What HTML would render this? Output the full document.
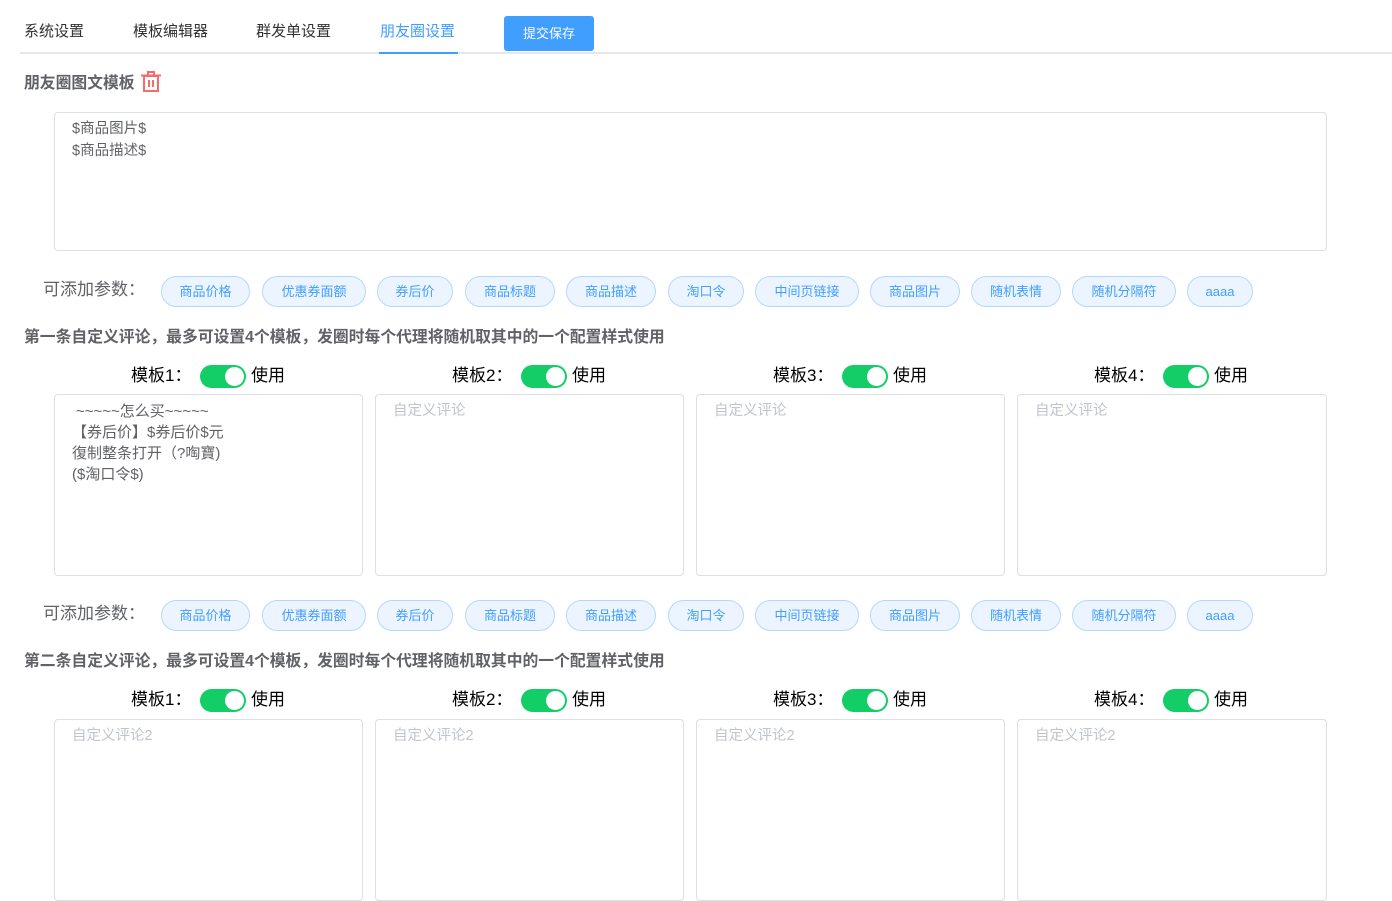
<!DOCTYPE html>
<html><head><meta charset="utf-8"><style>
*{box-sizing:border-box;margin:0;padding:0}
body{width:1392px;height:812px;overflow:hidden;background:#fff;font-family:"Liberation Sans","Noto Sans CJK SC",sans-serif;position:relative}
.a{position:absolute;white-space:nowrap}
.tab{font-size:15px;color:#303133;top:22px;line-height:20px}
.h{font-size:15.8px;font-weight:bold;color:#606266;line-height:20px}
.box{position:absolute;border:1px solid #dcdfe6;border-radius:4px;background:#fff}
.txt{font-size:15px;color:#606266;line-height:21px}
.ph{font-size:14.5px;color:#c0c4cc;line-height:21px}
.tag{position:absolute;height:31px;border:1px solid #b3d8ff;background:#ecf5ff;color:#409eff;border-radius:16px;font-size:13px;line-height:29px;text-align:center}
.lbl{font-size:17px;color:#606266;line-height:20px}
.tl{font-size:17px;color:#000;line-height:22px}
.sw{position:absolute;width:46px;height:23px;border-radius:12px;background:#13ce66}
.sw::after{content:"";position:absolute;right:2px;top:2px;width:19px;height:19px;border-radius:50%;background:#fff}
</style></head><body>
<div class="a tab" style="left:24px">系统设置</div>
<div class="a tab" style="left:133px">模板编辑器</div>
<div class="a tab" style="left:256px">群发单设置</div>
<div class="a tab" style="left:380px;color:#409eff">朋友圈设置</div>
<div class="a" style="left:20px;top:52px;width:1372px;height:2px;background:#e4e7ed"></div>
<div class="a" style="left:379px;top:52px;width:79px;height:2px;background:#409eff"></div>
<div class="a" style="left:504px;top:16px;width:90px;height:35px;background:#409eff;border-radius:3px;color:#fff;font-size:13px;line-height:35px;text-align:center">提交保存</div>

<div class="a h" style="left:24px;top:74px">朋友圈图文模板</div>
<svg class="a" style="left:140px;top:70px" width="22" height="23" viewBox="0 0 22 23"><g fill="none" stroke="#f56c6c" stroke-width="2"><path d="M1 5.5h20M8 5V2h6v3"/><rect x="4" y="6" width="14" height="15"/><path d="M9 10v7M13 10v7"/></g></svg>
<div class="box" style="left:54px;top:112px;width:1273px;height:139px"></div>
<div class="a txt" style="left:72px;top:118px;font-size:14.5px;line-height:22px">$商品图片$<br>$商品描述$</div>

<div class="a lbl" style="left:43px;top:280px">可添加参数：</div>
<div class="tag" style="left:161px;top:276px;width:89px">商品价格</div>
<div class="tag" style="left:262px;top:276px;width:104px">优惠券面额</div>
<div class="tag" style="left:377px;top:276px;width:76px">券后价</div>
<div class="tag" style="left:465px;top:276px;width:90px">商品标题</div>
<div class="tag" style="left:566px;top:276px;width:90px">商品描述</div>
<div class="tag" style="left:668px;top:276px;width:76px">淘口令</div>
<div class="tag" style="left:755px;top:276px;width:104px">中间页链接</div>
<div class="tag" style="left:870px;top:276px;width:90px">商品图片</div>
<div class="tag" style="left:971px;top:276px;width:90px">随机表情</div>
<div class="tag" style="left:1072px;top:276px;width:104px">随机分隔符</div>
<div class="tag" style="left:1187px;top:276px;width:66px">aaaa</div>

<div class="a h" style="left:24px;top:328px">第一条自定义评论，最多可设置4个模板，发圈时每个代理将随机取其中的一个配置样式使用</div>

<div class="a tl" style="left:131px;top:365px">模板1：</div><div class="sw" style="left:200px;top:365px"></div><div class="a tl" style="left:251px;top:365px">使用</div>
<div class="a tl" style="left:452px;top:365px">模板2：</div><div class="sw" style="left:521px;top:365px"></div><div class="a tl" style="left:572px;top:365px">使用</div>
<div class="a tl" style="left:773px;top:365px">模板3：</div><div class="sw" style="left:842px;top:365px"></div><div class="a tl" style="left:893px;top:365px">使用</div>
<div class="a tl" style="left:1094px;top:365px">模板4：</div><div class="sw" style="left:1163px;top:365px"></div><div class="a tl" style="left:1214px;top:365px">使用</div>

<div class="box" style="left:54px;top:394px;width:309px;height:182px"></div>
<div class="box" style="left:375px;top:394px;width:309px;height:182px"></div>
<div class="box" style="left:696px;top:394px;width:309px;height:182px"></div>
<div class="box" style="left:1017px;top:394px;width:310px;height:182px"></div>
<div class="a txt" style="left:76px;top:401px">~~~~~怎么买~~~~~</div>
<div class="a txt" style="left:72px;top:422px;line-height:21px">【券后价】$券后价$元<br>復制整条打开（?啕寶)<br>($淘口令$)</div>
<div class="a ph" style="left:393px;top:401px">自定义评论</div>
<div class="a ph" style="left:714px;top:401px">自定义评论</div>
<div class="a ph" style="left:1035px;top:401px">自定义评论</div>

<div class="a lbl" style="left:43px;top:604px">可添加参数：</div>
<div class="tag" style="left:161px;top:600px;width:89px">商品价格</div>
<div class="tag" style="left:262px;top:600px;width:104px">优惠券面额</div>
<div class="tag" style="left:377px;top:600px;width:76px">券后价</div>
<div class="tag" style="left:465px;top:600px;width:90px">商品标题</div>
<div class="tag" style="left:566px;top:600px;width:90px">商品描述</div>
<div class="tag" style="left:668px;top:600px;width:76px">淘口令</div>
<div class="tag" style="left:755px;top:600px;width:104px">中间页链接</div>
<div class="tag" style="left:870px;top:600px;width:90px">商品图片</div>
<div class="tag" style="left:971px;top:600px;width:90px">随机表情</div>
<div class="tag" style="left:1072px;top:600px;width:104px">随机分隔符</div>
<div class="tag" style="left:1187px;top:600px;width:66px">aaaa</div>

<div class="a h" style="left:24px;top:652px">第二条自定义评论，最多可设置4个模板，发圈时每个代理将随机取其中的一个配置样式使用</div>

<div class="a tl" style="left:131px;top:689px">模板1：</div><div class="sw" style="left:200px;top:689px"></div><div class="a tl" style="left:251px;top:689px">使用</div>
<div class="a tl" style="left:452px;top:689px">模板2：</div><div class="sw" style="left:521px;top:689px"></div><div class="a tl" style="left:572px;top:689px">使用</div>
<div class="a tl" style="left:773px;top:689px">模板3：</div><div class="sw" style="left:842px;top:689px"></div><div class="a tl" style="left:893px;top:689px">使用</div>
<div class="a tl" style="left:1094px;top:689px">模板4：</div><div class="sw" style="left:1163px;top:689px"></div><div class="a tl" style="left:1214px;top:689px">使用</div>

<div class="box" style="left:54px;top:719px;width:309px;height:182px"></div>
<div class="box" style="left:375px;top:719px;width:309px;height:182px"></div>
<div class="box" style="left:696px;top:719px;width:309px;height:182px"></div>
<div class="box" style="left:1017px;top:719px;width:310px;height:182px"></div>
<div class="a ph" style="left:72px;top:726px">自定义评论2</div>
<div class="a ph" style="left:393px;top:726px">自定义评论2</div>
<div class="a ph" style="left:714px;top:726px">自定义评论2</div>
<div class="a ph" style="left:1035px;top:726px">自定义评论2</div>
</body></html>
